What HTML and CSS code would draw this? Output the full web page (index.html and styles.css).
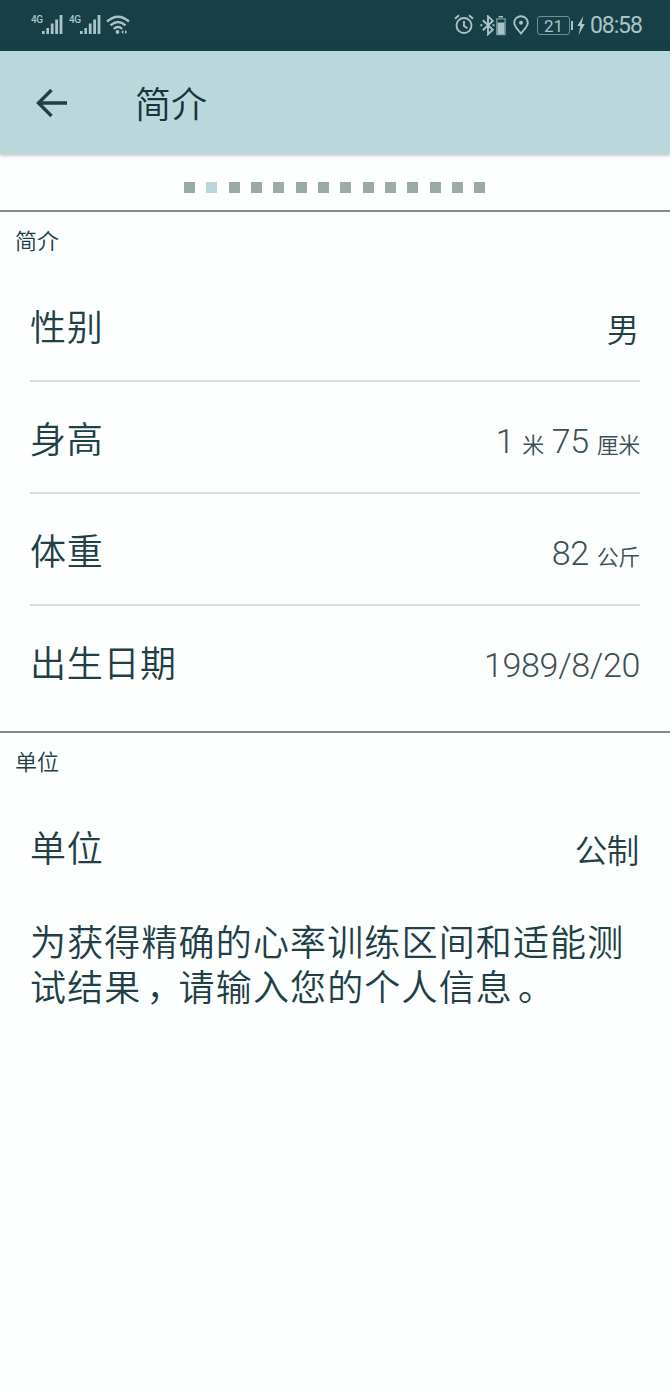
FILE: index.html
```html
<!DOCTYPE html>
<html lang="zh-CN">
<head>
<meta charset="utf-8">
<title>简介</title>
<link rel="stylesheet" href="styles.css">
</head>
<body>
<div class="status">
  <div class="status-left">
    <span class="net">4G</span>
    <svg class="signal" width="21" height="20" viewBox="0 0 21 20"><path d="M0 16h2.6v3H0zM4.4 13h2.6v6H4.4zM8.8 8.500h2.800v10.500H8.800zM13.200 4.500h2.800v14.500h-2.800zM17.600 0h2.800v19h-2.800z"/></svg>
    <span class="net net-second">4G</span>
    <svg class="signal" width="21" height="20" viewBox="0 0 21 20"><path d="M0 16h2.6v3H0zM4.4 13h2.6v6H4.4zM8.8 8.500h2.800v10.500H8.800zM13.200 4.500h2.800v14.500h-2.800zM17.600 0h2.800v19h-2.800z"/></svg>
    <svg class="wifi" width="24" height="20" viewBox="0 0 24 20"><g fill="none" stroke-width="2.400"><path d="M1 6.500Q12-3.200 23 6.500M4.500 10.300Q12 3.600 19.500 10.300M7.800 13.900Q12 10.300 16.200 13.900"/></g><circle cx="11.500" cy="17" r="1.900"/><path d="M15.200 17l2.200-2v4zM19 15l2.200 2-2.200 2z" stroke="none"/></svg>
  </div>
  <div class="status-right">
    <svg class="alarm" width="20" height="21" viewBox="0 0 20 21"><g fill="none" stroke-width="1.900"><circle cx="10" cy="11.500" r="7.500"/><path d="M10 7v5l3.500 2.300M1 4.700L5 1.300M15 1.300l4 3.400"/></g></svg>
    <svg class="bluetooth" width="27" height="21" viewBox="0 0 27 21"><path d="M2.800 5.300l10 9.400-4.800 4.600V1.300l4.800 4.600-10 9.400" fill="none" stroke-width="1.900"/><path d="M.3 9.300h2v2h-2zM12.500 9.300h2v2h-2zM18.600 1h4.500v1.500h-4.500z" stroke="none"/><path d="M16.800 3.800h8.300v15.700h-8.300z" fill="none" stroke-width="1.300" opacity=".7"/><path d="M17.500 7.500h7v11.800h-7z" stroke="none"/></svg>
    <svg class="pin" width="16" height="20" viewBox="0 0 16 20"><path d="M8 18.500C4.500 14 1.200 11.200 1.200 7.700a6.800 6.500 0 0 1 13.600 0C14.800 11.200 11.500 14 8 18.500z" fill="none" stroke-width="1.900"/><circle cx="8" cy="7.800" r="2" stroke="none"/></svg>
    <div class="battery"><span class="battery-body">21</span><span class="battery-tip"></span></div>
    <svg class="bolt" width="8" height="19" viewBox="0 0 8 19"><path d="M6.300 0L.3 10h3L1.700 19 7.800 8H4.700z" stroke="none"/></svg>
    <span class="clock">08:58</span>
  </div>
</div>
<header class="bar">
  <svg class="back" width="32" height="32" viewBox="0 0 32 32"><path d="M15.500 3L2.500 16l13 13M3 16h28" fill="none"/></svg>
  <h1 class="title">简介</h1>
</header>
<nav class="dots">
  <i class="dot"></i><i class="dot dot-on"></i><i class="dot"></i><i class="dot"></i><i class="dot"></i><i class="dot"></i><i class="dot"></i><i class="dot"></i><i class="dot"></i><i class="dot"></i><i class="dot"></i><i class="dot"></i><i class="dot"></i><i class="dot"></i>
</nav>
<section class="section profile">
  <h2 class="heading">简介</h2>
  <div class="row"><span class="label">性别</span><span class="value value-cjk">男</span></div>
  <div class="row"><span class="label">身高</span><span class="value">1 <small class="unit">米</small> 75 <small class="unit">厘米</small></span></div>
  <div class="row"><span class="label">体重</span><span class="value">82 <small class="unit">公斤</small></span></div>
  <div class="row"><span class="label">出生日期</span><span class="value">1989/8/20</span></div>
</section>
<section class="section">
  <h2 class="heading">单位</h2>
  <div class="row"><span class="label">单位</span><span class="value value-cjk">公制</span></div>
  <p class="note">为获得精确的心率训练区间和适能测<br>试结果<span class="mark">，</span>请输入您的个人信息<span class="mark">。</span></p>
</section>
</body>
</html>
```
FILE: styles.css
```css
* { box-sizing: border-box; }
body {
  margin: 0;
  min-height: 1391px;
  background: #fdfefe;
  color: #203f46;
  font-family: Roboto, "Noto Sans CJK SC", sans-serif;
  font-weight: 300;
}
svg { display: block; flex: none; }
.status {
  height: 51px;
  padding: 0 28px 0 31px;
  display: flex;
  justify-content: space-between;
  background: #173f47;
  color: #a9c3c8;
  font-weight: 400;
}
.status svg { fill: #a9c3c8; stroke: #a9c3c8; }
.status .signal { stroke: none; margin-top: 15px; }
.status-left, .status-right { display: flex; align-items: flex-start; }
.net { width: 11px; margin-top: 14px; font-size: 10px; line-height: 12px; letter-spacing: -.5px; font-weight: 500; }
.net-second { margin-left: 6px; }
.status .wifi { margin: 15px 0 0 5px; }
.wifi circle { stroke: none; }
.alarm { margin-top: 14px; }
.bluetooth { margin: 15px 0 0 6px; }
.pin { margin: 15px 0 0 6px; }
.battery { display: flex; align-items: center; margin: 16px 0 0 8px; }
.battery-body {
  width: 33px;
  height: 19px;
  border: 1px solid #6e9197;
  border-radius: 3px;
  font-size: 17px;
  line-height: 18px;
  text-align: center;
}
.battery-tip { width: 2px; height: 9px; margin-left: 1px; background: #a9c3c8; }
.bolt { margin: 16px 0 0 4px; }
.clock { margin: 13px 0 0 5px; font-size: 23px; line-height: 26px; letter-spacing: -1.1px; width: 52px; white-space: nowrap; }
.bar {
  position: relative;
  height: 103px;
  padding: 0 36px;
  display: flex;
  align-items: center;
  background: #bad8dc;
  box-shadow: 0 1px 4px rgba(60, 70, 80, .4);
}
.back path { stroke: #203f46; stroke-width: 3.400; }
.title { margin: 0 0 1px 67px; font-size: 36px; line-height: 52px; font-weight: 350; color: #18333a; font-family: "Noto Sans CJK SC", sans-serif; }
.dots { height: 56px; padding: 28px 0 0 184px; display: flex; gap: 11.35px; }
.dot { width: 11px; height: 11px; background: #9caaa6; }
.dot-on { background: #bad8dc; }
.section { border-top: 2px solid #858889; }
.profile { height: 521px; }
.heading { margin: 0; padding: 14px 15px 0; height: 58px; font-size: 22px; line-height: 32px; font-weight: 350; }
.row {
  height: 112px;
  margin: 0 30px;
  padding-top: 33px;
  display: flex;
  justify-content: space-between;
  border-bottom: 2px solid #d9dbdc;
}
.row:last-child, .section:last-child .row { border-bottom: 0; }
.label { font-size: 36px; line-height: 52px; letter-spacing: .7px; font-weight: 350; }
.value { font-size: 34px; line-height: 52px; letter-spacing: -.35px; color: #3b5055; }
.value-cjk { padding: 2px 1px 0 0; font-size: 32.5px; font-weight: 350; color: #203f46; }
.unit { font-size: 22px; font-weight: 350; }
.note { margin: 19px 30px 0; font-size: 36px; line-height: 45px; letter-spacing: 1.15px; white-space: nowrap; font-weight: 350; }
.mark { padding-left: 5px; letter-spacing: -3.85px; }
```
